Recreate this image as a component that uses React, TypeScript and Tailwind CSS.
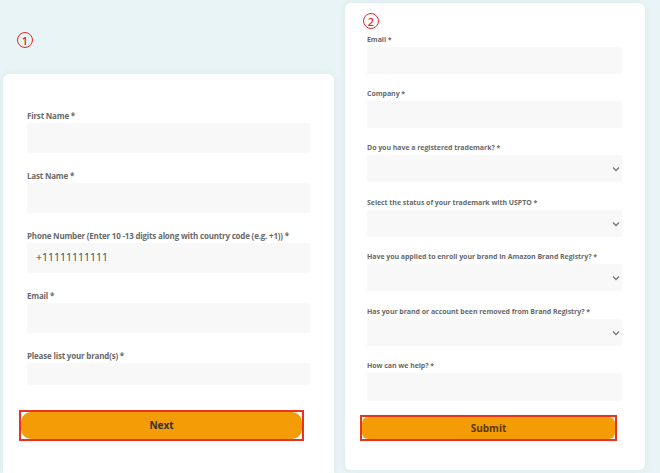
import React from "react";

const font = { fontFamily: '"Open Sans", "Liberation Sans", sans-serif' };

function Circled({ n }: { n: string }) {
  return (
    <div className="flex h-[16px] w-[16px] items-center justify-center rounded-full border-[1.5px] border-[#e3262f] text-[11px] font-semibold leading-none text-[#e3262f]">
      {n}
    </div>
  );
}

function Label({ children, small }: { children: React.ReactNode; small?: boolean }) {
  return (
    <div
      className={`h-[12px] whitespace-nowrap font-bold leading-[12px] text-[#6a6a6a] ${
        small ? "text-[7px] tracking-[-0.05px]" : "text-[8px] tracking-[-0.2px]"
      }`}
    >
      {children}
    </div>
  );
}

function Chevron() {
  return (
    <svg width="8" height="6" viewBox="0 0 8 6" className="text-[#777]">
      <path d="M1 1.5 L4 4.5 L7 1.5" fill="none" stroke="currentColor" strokeWidth="1.3" />
    </svg>
  );
}

export default function App() {
  const left = [
    { label: "First Name *" },
    { label: "Last Name *" },
    { label: "Phone Number (Enter 10 -13 digits along with country code (e.g. +1)) *", value: "+11111111111" },
    { label: "Email *" },
  ];

  const right = [
    { label: "Email *", select: false },
    { label: "Company *", select: false },
    { label: "Do you have a registered trademark? *", select: true },
    { label: "Select the status of your trademark with USPTO *", select: true },
    { label: "Have you applied to enroll your brand in Amazon Brand Registry? *", select: true },
    { label: "Has your brand or account been removed from Brand Registry? *", select: true },
  ];

  return (
    <div className="flex h-[473px] w-[660px] overflow-hidden bg-[#e9f4f7]" style={font}>
      {/* step 1 */}
      <div className="flex w-[345px] flex-col pl-[3px]">
        <div className="h-[74px] pl-[14px] pt-[32px]">
          <Circled n="1" />
        </div>
        <div className="w-[331px] flex-1 rounded-t-[6px] bg-white px-6 pt-[36px] shadow-[0_0_8px_rgba(0,0,0,0.06)]">
          {left.map((f) => (
            <div key={f.label} className="mb-[17px]">
              <Label>{f.label}</Label>
              <div className="mt-px flex h-[30px] items-center bg-[#f8f8f8] px-[9px] text-[10.5px] text-[#444]">
                {f.value}
              </div>
            </div>
          ))}
          <div>
            <Label>Please list your brand(s) *</Label>
            <div className="mt-px h-[22px] bg-[#f8f8f8]" />
          </div>
          <div className="-ml-2 mt-[25px] w-[285px] border-2 border-[#e8331f] bg-white">
            <div className="flex h-[27px] items-center justify-center rounded-[10px] bg-[#f39c05] text-[10px] font-bold text-[#333]">
              Next
            </div>
          </div>
        </div>
      </div>

      {/* step 2 */}
      <div className="pt-[3px]">
        <div className="h-[467px] w-[300px] rounded-[6px] bg-white pl-[22px] pr-[23px] pt-[10px] shadow-[0_0_8px_rgba(0,0,0,0.06)]">
          <div className="-ml-1">
            <Circled n="2" />
          </div>
          <div className="mt-[5px]">
            {right.map((f, i) => (
              <div key={f.label} className={i === 2 || i === 4 ? "mb-[15px]" : "mb-[14px]"}>
                <Label small>{f.label}</Label>
                <div className="mt-px flex h-[27px] items-center justify-end bg-[#f8f8f8] pr-[2px]">
                  {f.select && <Chevron />}
                </div>
              </div>
            ))}
            <div>
              <Label small>How can we help? *</Label>
              <div className="mt-px h-[28px] bg-[#f8f8f8]" />
            </div>
            <div className="-ml-[7px] mt-[14px] w-[257px] border-2 border-[#e8331f] bg-white">
              <div className="flex h-[22px] items-center justify-center rounded-[6px] bg-[#f39c05] text-[10px] font-bold text-[#5a3a00]">
                Submit
              </div>
            </div>
          </div>
        </div>
      </div>
    </div>
  );
}
